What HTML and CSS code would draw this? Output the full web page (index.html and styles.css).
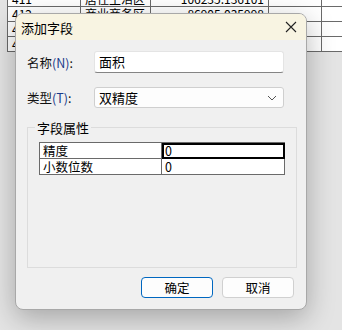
FILE: index.html
```html
<!DOCTYPE html>
<html lang="zh-CN">
<head>
  <meta charset="UTF-8">
  <title>添加字段</title>
  <link rel="stylesheet" href="styles.css">
</head>
<body>
  <!-- attribute table behind the dialog -->
  <table class="grid">
    <colgroup>
      <col class="c-id"><col class="c-name"><col class="c-area"><col class="c-4"><col class="c-5">
    </colgroup>
    <tr><td>411</td><td>居住生活区</td><td class="num">106235.136101</td><td></td><td></td></tr>
    <tr><td>412</td><td>商业商务区</td><td class="num">86905.035998</td><td></td><td></td></tr>
    <tr><td>413</td><td></td><td class="num"></td><td></td><td></td></tr>
    <tr><td>414</td><td></td><td class="num"></td><td></td><td></td></tr>
  </table>

  <!-- Add field dialog -->
  <div class="dialog">
    <div class="title-bar">
      <span class="title">添加字段</span>
      <svg class="close" width="12" height="12" viewBox="0 0 12 12">
        <path d="M1 1 L11 11 M11 1 L1 11" stroke="#222" stroke-width="1.1" fill="none"/>
      </svg>
    </div>
    <div class="dialog-body">
      <div class="row">
        <label class="lbl">名称<span class="key">(N)</span>:</label>
        <div class="text-input">面积</div>
      </div>
      <div class="row last">
        <label class="lbl">类型<span class="key">(T)</span>:</label>
        <div class="select">
          <span>双精度</span>
          <svg width="10" height="6" viewBox="0 0 10 6">
            <path d="M1 1 L5 5 L9 1" stroke="#555" stroke-width="1" fill="none"/>
          </svg>
        </div>
      </div>

      <fieldset class="group">
        <legend>字段属性</legend>
        <table class="props">
          <tr><td class="p-name">精度</td><td class="p-val focus">0</td></tr>
          <tr><td class="p-name">小数位数</td><td class="p-val">0</td></tr>
        </table>
      </fieldset>

      <div class="buttons">
        <button class="btn primary">确定</button>
        <button class="btn">取消</button>
      </div>
    </div>
  </div>
</body>
</html>
```

FILE: styles.css
```css
/* General */
body {
  margin: 0;
  width: 342px;
  height: 330px;
  overflow: hidden;
  position: relative;
  background-color: #e4e4e4;
  font-family: "Microsoft YaHei", "Noto Sans CJK SC", sans-serif;
  font-size: 12px;
  color: #000;
}

/* Background grid */
.grid {
  border-collapse: collapse;
  table-layout: fixed;
  width: 342px;
  background-color: #fff;
  margin-top: -9px;
  margin-left: 7px;
}

.grid td {
  border: 1px solid #6a6a6a;
  height: 14px;
  padding: 0 4px;
  font-size: 12px;
  line-height: 14px;
  white-space: nowrap;
  overflow: hidden;
}

.grid .num { text-align: right; }

.c-id { width: 73px; }
.c-name { width: 70px; }
.c-area { width: 118px; }
.c-4 { width: 53px; }
.c-5 { width: 28px; }

/* Dialog */
.dialog {
  position: absolute;
  left: 15px;
  top: 13px;
  width: 292px;
  height: 297px;
  background-color: #f0f0f0;
  border: 1px solid #a8a8a8;
  border-radius: 8px;
  box-shadow: 0 8px 28px rgba(0, 0, 0, 0.28);
  overflow: hidden;
  box-sizing: border-box;
}

.title-bar {
  height: 26px;
  background-color: #f8f4e2;
  display: flex;
  align-items: center;
  justify-content: space-between;
  padding: 0 9px 0 5px;
}

.title {
  font-size: 13px;
}

.dialog-body {
  padding: 11px 11px 0 11px;
}

.row {
  display: flex;
  align-items: center;
  margin-bottom: 14px;
}

.row.last {
  margin-bottom: 10px;
}

.lbl {
  width: 67px;
  font-size: 12.5px;
  color: #111;
}

.key {
  color: #1a3a8a;
}

.text-input {
  width: 190px;
  height: 22px;
  box-sizing: border-box;
  background-color: #fff;
  border: 1px solid #e4e4e4;
  border-bottom: 1px solid #848484;
  border-radius: 3px;
  padding: 0 4px;
  line-height: 20px;
  font-size: 13px;
}

.select {
  width: 190px;
  height: 21px;
  box-sizing: border-box;
  background-color: #fdfdfd;
  border: 1px solid #cfcfcf;
  border-radius: 3px;
  padding: 0 6px 0 4px;
  display: flex;
  align-items: center;
  justify-content: space-between;
  font-size: 13px;
}

/* Group box */
.group {
  margin: 0;
  padding: 5px 11px 0 11px;
  height: 150px;
  box-sizing: border-box;
  border: 1px solid #dcdcdc;
  border-radius: 0;
}

.group legend {
  padding: 0 2px;
  margin-left: -4px;
  font-size: 13px;
}

.props {
  border-collapse: collapse;
  width: 246px;
  background-color: #fff;
}

.props td {
  border: 1px solid #6a6a6a;
  height: 15px;
  padding: 0 3px;
  font-size: 12.5px;
  line-height: 15px;
}

.p-name { width: 115px; }

.p-val.focus {
  outline: 2px solid #000;
  outline-offset: -2px;
}

/* Buttons */
.buttons {
  display: flex;
  justify-content: flex-end;
  gap: 9px;
  margin-top: 9px;
  padding-right: 1px;
}

.btn {
  width: 72px;
  height: 21px;
  background-color: #fdfdfd;
  border: 1px solid #d0d0d0;
  border-radius: 4px;
  font-family: inherit;
  font-size: 12.5px;
  padding: 0;
}

.btn.primary {
  border-color: #0067c0;
}
```
